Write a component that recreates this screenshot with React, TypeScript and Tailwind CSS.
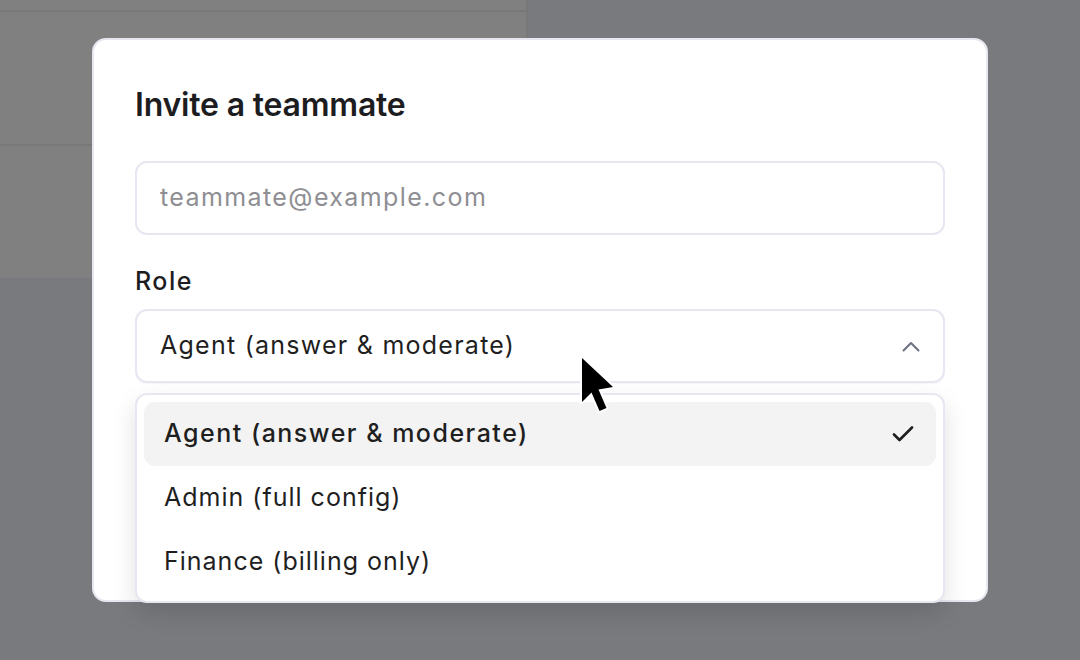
import React from "react";

function ChevronUp() {
  return (
    <svg width="18" height="11" viewBox="0 0 18 11" fill="none">
      <path d="M1.5 9.5 L9 2 L16.5 9.5" stroke="#6b7280" strokeWidth="2" strokeLinecap="round" strokeLinejoin="round" />
    </svg>
  );
}

function Check() {
  return (
    <svg width="22" height="16" viewBox="0 0 22 16" fill="none">
      <path d="M2 8.5 L7.5 14 L20 1.5" stroke="#1f1f1f" strokeWidth="2.6" strokeLinecap="round" strokeLinejoin="round" />
    </svg>
  );
}

function Cursor() {
  return (
    <svg width="40" height="60" viewBox="0 0 40 60" className="absolute left-[578px] top-[355px] z-20">
      <path
        d="M4 3 L4 47 L13.5 37.5 L21.5 56 L28.5 53 L20.5 34.5 L35 32 Z"
        fill="#000"
        stroke="#fff"
        strokeWidth="4"
        strokeLinejoin="round"
        paintOrder="stroke"
      />
    </svg>
  );
}

export default function App() {
  const items = [
    { label: "Agent (answer & moderate)", selected: true },
    { label: "Admin (full config)", selected: false },
    { label: "Finance (billing only)", selected: false },
  ];
  return (
    <div
      className="relative w-[1080px] h-[660px] overflow-hidden bg-[#797a7e]"
      style={{ fontFamily: "Inter, 'Noto Sans', 'Liberation Sans', sans-serif" }}
    >
      {/* dimmed page behind */}
      <div className="w-[528px] h-[278px] bg-[#808080] border-r-2 border-[#787878] flex flex-col">
        <div className="h-[10px]" />
        <div className="h-[2px] bg-[#787878]" />
        <div className="h-[132px]" />
        <div className="h-[2px] bg-[#787878]" />
      </div>

      {/* modal */}
      <div className="absolute left-[92px] top-[38px] w-[896px] h-[564px] bg-white rounded-[14px] border-2 border-[#e6e7f1] px-[41px] pt-[45px] flex flex-col">
        <h2 className="text-[32px] leading-[40px] font-semibold text-[#1d1d1f] tracking-[-0.2px]">
          Invite a teammate
        </h2>
        <div className="mt-[36px] h-[74px] rounded-[12px] border-2 border-[#e6e7f1] flex items-center px-[23px]">
          <span className="text-[25px] tracking-[1.4px] text-[#8e8e93]">teammate@example.com</span>
        </div>
        <div className="mt-[30px] text-[25px] leading-[32px] font-medium tracking-[1.5px] text-[#1d1d1f]">Role</div>
        <div className="relative mt-[12px]">
          <div className="h-[74px] rounded-[12px] border-2 border-[#e6e7f1] flex items-center justify-between pl-[23px] pr-[23px] shadow-[0_1px_2px_rgba(0,0,0,0.04)]">
            <span className="text-[25px] tracking-[1.25px] text-[#1f1f1f]">Agent (answer &amp; moderate)</span>
            <ChevronUp />
          </div>
          {/* dropdown */}
          <div className="absolute left-0 right-0 top-[84px] h-[210px] bg-white rounded-[12px] border-2 border-[#e6e7f1] p-[7px] shadow-[0_10px_24px_rgba(0,0,0,0.12)] flex flex-col z-10">
            {items.map((it) => (
              <div
                key={it.label}
                className={
                  "h-[64px] rounded-[11px] flex items-center justify-between pl-[20px] pr-[22px] " +
                  (it.selected ? "bg-[#f3f3f3]" : "")
                }
              >
                <span
                  className={
                    "text-[25px] text-[#1f1f1f] " +
                    (it.selected ? "font-medium tracking-[1.5px]" : "font-normal tracking-[1px]")
                  }
                >
                  {it.label}
                </span>
                {it.selected && <Check />}
              </div>
            ))}
          </div>
        </div>
      </div>

      <Cursor />
    </div>
  );
}
